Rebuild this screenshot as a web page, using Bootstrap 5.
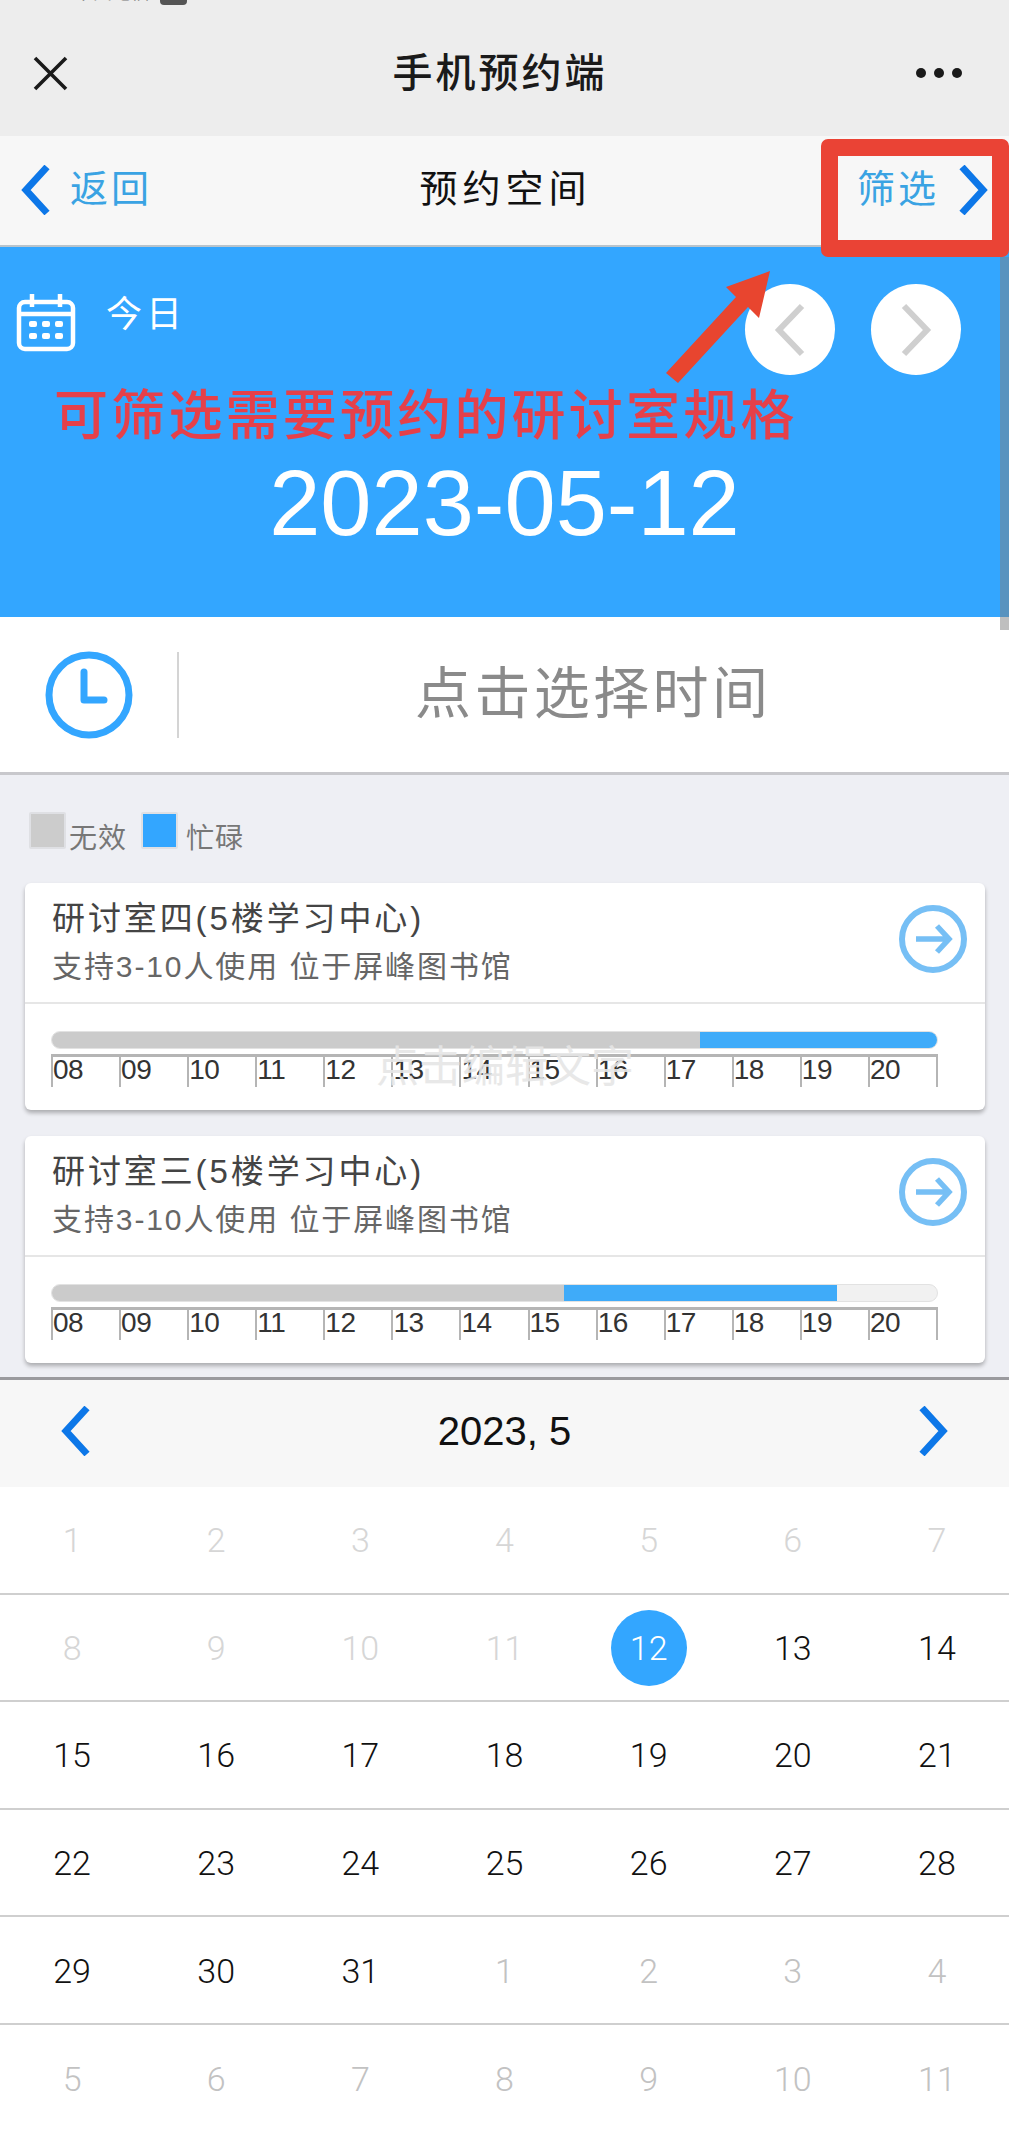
<!DOCTYPE html>
<html lang="zh-CN">
<head>
  <meta charset="UTF-8">
  <title>手机预约端</title>
  <meta name="viewport" content="width=device-width, initial-scale=1">
  <link href="https://cdn.jsdelivr.net/npm/bootstrap@5.3.3/dist/css/bootstrap.min.css" rel="stylesheet">
  <style>
    html, body {
      margin: 0;
      background: #fff;
    }
    body {
      font-family: "Liberation Sans", "Noto Sans CJK SC", sans-serif;
      color: #222;
    }
    .page-wrap {
      position: relative;
      width: 1009px;
      height: 2132px;
      overflow: hidden;
    }
    /* wechat title bar */
    .wx-bar {
      height: 136px;
      background: #ededed;
      padding: 10px 47px 0 33px;
    }
    .wx-status {
      position: absolute;
      left: 74px;
      top: -19px;
      gap: 10px;
      font-size: 19px;
      line-height: 24px;
      color: #777;
    }
    .wx-badge {
      width: 27px;
      height: 24px;
      border-radius: 4px;
      background: #555;
    }
    .wx-title {
      font-size: 40px;
      font-weight: 500;
      letter-spacing: 3px;
      color: #1a1a1a;
      margin-left: 16px;
    }
    .wx-dot {
      width: 10px;
      height: 10px;
      border-radius: 50%;
      background: #1a1a1a;
    }
    /* page nav */
    .nav-strip {
      height: 111px;
      background: #f7f7f7;
      border-bottom: 2px solid #b9c4cc;
      padding: 0 21px 2px;
    }
    .nav-link-blue {
      font-size: 38px;
      letter-spacing: 3px;
      color: #3aa3e3;
    }
    .nav-side {
      width: 240px;
      gap: 19px;
    }
    .nav-name {
      font-size: 38px;
      letter-spacing: 5px;
      color: #111;
      margin-left: 2px;
    }
    /* blue date panel */
    .date-panel {
      position: relative;
      height: 370px;
      background: #33a6ff;
      padding: 37px 48px 0 16px;
    }
    .today-label {
      font-size: 36px;
      letter-spacing: 4px;
      line-height: 40px;
      color: #fff;
      margin: 11px 0 0 30px;
    }
    .round-btn {
      width: 90px;
      height: 91px;
      border-radius: 50%;
      background: #fff;
    }
    .round-gap {
      gap: 36px;
    }
    .date-big {
      font-size: 92px;
      line-height: 100px;
      color: #fff;
      text-align: center;
      margin: 78px 0 0 32px;
    }
    .side-scroll {
      position: absolute;
      right: 0;
      top: 10px;
      width: 9px;
      height: 373px;
      background: rgba(128, 128, 128, .5);
    }
    /* time picker row */
    .time-row {
      height: 158px;
      background: #fff;
      border-bottom: 3px solid #c8c8cc;
      padding-left: 44px;
    }
    .time-rule {
      width: 2px;
      height: 86px;
      background: #d4d4d4;
      margin-left: 43px;
    }
    .time-text {
      font-size: 56px;
      line-height: 64px;
      letter-spacing: 3.4px;
      color: #8a8a8a;
      margin: -2px 0 0 58px;
      padding-left: 178px;
    }
    /* room list */
    .list-area {
      height: 602px;
      background: #eeeff4;
      padding: 37px 24px 0 25px;
    }
    .legend-row {
      height: 36px;
      margin-bottom: 35px;
      margin-left: 4px;
      align-items: flex-start;
    }
    .legend-box {
      width: 37px;
      height: 37px;
      border: 2px solid #dfe0e4;
      border-radius: 2px;
    }
    .legend-gray { background: #cccccc; }
    .legend-blue { background: #33a6ff; margin-left: 14px; }
    .legend-text {
      font-size: 28px;
      line-height: 32px;
      letter-spacing: 1px;
      color: #777;
      margin: 11px 0 0 3px;
    }
    .legend-blue + .legend-text { margin-left: 8px; }
    .room-card {
      position: relative;
      height: 227px;
      margin-bottom: 26px;
      border: 0;
      border-radius: 6px;
      background: #fff;
      box-shadow: 0 3px 4px rgba(0, 0, 0, .28);
    }
    .room-head {
      height: 121px;
      border-bottom: 2px solid #e6e6e6;
      padding: 14px 18px 0 27px;
    }
    .room-name {
      font-size: 33px;
      line-height: 44px;
      letter-spacing: 2.9px;
      color: #444;
    }
    .room-desc {
      font-size: 30px;
      line-height: 44px;
      letter-spacing: 1.9px;
      color: #666;
      margin-top: 4px;
    }
    .room-body {
      padding: 27px 47px 0 26px;
    }
    .slot-bar {
      height: 18px;
      border-radius: 9px;
      overflow: hidden;
      background: #f1f1f1;
      border: 1px solid #e2e2e2;
    }
    .slot-off { background: #cbcbcb; }
    .slot-busy { background: #3fabf9; }
    .tick-row {
      margin-top: 5px;
      height: 33px;
      border-top: 3px solid #b5b5b5;
      border-right: 2px solid #b5b5b5;
    }
    .tick-cell {
      flex: 1 1 0;
      border-left: 2px solid #b5b5b5;
      font-size: 28px;
      line-height: 26px;
      color: #333;
      letter-spacing: -.5px;
    }
    .edit-mark {
      position: absolute;
      left: 351px;
      top: 160px;
      font-size: 43px;
      line-height: 48px;
      white-space: nowrap;
      color: #e6e6e6;
      opacity: .9;
    }
    /* month calendar */
    .month-head {
      height: 110px;
      background: #f7f7f7;
      border-top: 3px solid #9a9a9e;
      padding: 0 61px 5px;
    }
    .month-text {
      font-size: 40px;
      color: #111;
    }
    .day-row {
      height: 107.6px;
      border-bottom: 2.5px solid #cfcfcf;
      padding-top: 2px;
    }
    .day-row:last-child { border-bottom: 0; }
    .day-cell {
      font-family: Roboto, "Liberation Sans", sans-serif;
      font-weight: 300;
      font-size: 34px;
      color: #111;
      flex: 1 1 0;
      text-align: center;
    }
    .day-dim { color: #d6d6d6; }
    .day-out { color: #c2c2c2; }
    .day-now {
      width: 76px;
      height: 76px;
      border-radius: 50%;
      background: #33a6ff;
      color: #fff;
    }
    /* annotation laid over the page */
    .note-box {
      position: absolute;
      left: 821px;
      top: 139px;
      width: 188px;
      height: 118px;
      border: 17px solid #ea4335;
      border-radius: 7px;
    }
    .note-arrow {
      position: absolute;
      left: 655px;
      top: 262px;
    }
    .note-text {
      position: absolute;
      left: 54px;
      top: 384px;
      font-size: 54px;
      line-height: 64px;
      font-weight: 500;
      letter-spacing: 3.2px;
      white-space: nowrap;
      color: #e5404a;
    }
  </style>
</head>
<body>
  <div class="page-wrap">
    <div class="wx-status d-flex align-items-end"><span>中国电信</span><span class="wx-badge"></span></div>

    <div class="wx-bar d-flex align-items-center justify-content-between">
      <svg width="35" height="35" viewBox="0 0 35 35"><path d="M2 2 L33 33 M33 2 L2 33" stroke="#1a1a1a" stroke-width="3.6" fill="none"/></svg>
      <div class="wx-title">手机预约端</div>
      <div class="d-flex gap-2">
        <span class="wx-dot"></span><span class="wx-dot"></span><span class="wx-dot"></span>
      </div>
    </div>

    <div class="nav-strip d-flex align-items-center justify-content-between">
      <div class="nav-side d-flex align-items-center">
        <svg width="30" height="50" viewBox="0 0 30 50"><polyline points="26,2 5,25 26,48" fill="none" stroke="#0d77e8" stroke-width="7"/></svg>
        <span class="nav-link-blue">返回</span>
      </div>
      <div class="nav-name">预约空间</div>
      <div class="nav-side d-flex align-items-center justify-content-end">
        <span class="nav-link-blue">筛选</span>
        <svg width="30" height="50" viewBox="0 0 30 50"><polyline points="4,2 25,25 4,48" fill="none" stroke="#0d77e8" stroke-width="7"/></svg>
      </div>
    </div>

    <div class="date-panel">
      <div class="d-flex justify-content-between">
        <div class="d-flex align-items-start">
          <svg class="mt-2" width="60" height="60" viewBox="0 0 60 60">
            <rect x="3" y="10" width="54" height="47" rx="6" fill="none" stroke="#fff" stroke-width="4.5"/>
            <path d="M3 22 H57 M16 2 V15 M44 2 V15" stroke="#fff" stroke-width="4.5" fill="none"/>
            <g fill="#fff">
              <rect x="13" y="29" width="8" height="6" rx="2"/><rect x="26" y="29" width="8" height="6" rx="2"/><rect x="39" y="29" width="8" height="6" rx="2"/>
              <rect x="13" y="41" width="8" height="6" rx="2"/><rect x="26" y="41" width="8" height="6" rx="2"/><rect x="39" y="41" width="8" height="6" rx="2"/>
            </g>
          </svg>
          <div class="today-label">今日</div>
        </div>
        <div class="d-flex round-gap">
          <div class="round-btn d-flex align-items-center justify-content-center">
            <svg width="32" height="54" viewBox="0 0 32 54"><polyline points="28,3 5,27 28,51" fill="none" stroke="#cfcfcf" stroke-width="6"/></svg>
          </div>
          <div class="round-btn d-flex align-items-center justify-content-center">
            <svg width="32" height="54" viewBox="0 0 32 54"><polyline points="4,3 27,27 4,51" fill="none" stroke="#cfcfcf" stroke-width="6"/></svg>
          </div>
        </div>
      </div>
      <div class="date-big">2023-05-12</div>
      <div class="side-scroll"></div>
    </div>

    <div class="time-row d-flex align-items-center">
      <svg width="90" height="90" viewBox="0 0 90 90">
        <circle cx="45" cy="45" r="40" fill="none" stroke="#33a6ff" stroke-width="7"/>
        <path d="M40 22 V50 H60" fill="none" stroke="#33a6ff" stroke-width="7" stroke-linecap="round" stroke-linejoin="round"/>
      </svg>
      <div class="time-rule"></div>
      <div class="time-text">点击选择时间</div>
    </div>

    <div class="list-area">
      <div class="legend-row d-flex">
        <span class="legend-box legend-gray"></span><span class="legend-text">无效</span>
        <span class="legend-box legend-blue"></span><span class="legend-text">忙碌</span>
      </div>

      <div class="card room-card">
        <div class="room-head d-flex justify-content-between align-items-start">
          <div>
            <div class="room-name">研讨室四(5楼学习中心)</div>
            <div class="room-desc">支持3-10人使用 位于屏峰图书馆</div>
          </div>
          <svg class="mt-2" width="68" height="68" viewBox="0 0 68 68">
            <circle cx="34" cy="34" r="31" fill="none" stroke="#76bff5" stroke-width="6"/>
            <path d="M17 34 H50 M38 21 L50 34 L38 47" fill="none" stroke="#76bff5" stroke-width="5.5"/>
          </svg>
        </div>
        <div class="room-body">
          <div class="slot-bar d-flex">
            <div class="slot-off" style="width: 73.2%"></div>
            <div class="slot-busy" style="width: 26.8%"></div>
          </div>
          <div class="tick-row d-flex">
            <div class="tick-cell">08</div><div class="tick-cell">09</div><div class="tick-cell">10</div><div class="tick-cell">11</div><div class="tick-cell">12</div><div class="tick-cell">13</div><div class="tick-cell">14</div><div class="tick-cell">15</div><div class="tick-cell">16</div><div class="tick-cell">17</div><div class="tick-cell">18</div><div class="tick-cell">19</div><div class="tick-cell">20</div>
          </div>
        </div>
        <div class="edit-mark">点击编辑文字</div>
      </div>

      <div class="card room-card">
        <div class="room-head d-flex justify-content-between align-items-start">
          <div>
            <div class="room-name">研讨室三(5楼学习中心)</div>
            <div class="room-desc">支持3-10人使用 位于屏峰图书馆</div>
          </div>
          <svg class="mt-2" width="68" height="68" viewBox="0 0 68 68">
            <circle cx="34" cy="34" r="31" fill="none" stroke="#76bff5" stroke-width="6"/>
            <path d="M17 34 H50 M38 21 L50 34 L38 47" fill="none" stroke="#76bff5" stroke-width="5.5"/>
          </svg>
        </div>
        <div class="room-body">
          <div class="slot-bar d-flex">
            <div class="slot-off" style="width: 57.9%"></div>
            <div class="slot-busy" style="width: 30.8%"></div>
          </div>
          <div class="tick-row d-flex">
            <div class="tick-cell">08</div><div class="tick-cell">09</div><div class="tick-cell">10</div><div class="tick-cell">11</div><div class="tick-cell">12</div><div class="tick-cell">13</div><div class="tick-cell">14</div><div class="tick-cell">15</div><div class="tick-cell">16</div><div class="tick-cell">17</div><div class="tick-cell">18</div><div class="tick-cell">19</div><div class="tick-cell">20</div>
          </div>
        </div>
      </div>
    </div>

    <div class="month-head d-flex align-items-center justify-content-between">
      <svg width="30" height="50" viewBox="0 0 30 50"><polyline points="26,2 5,25 26,48" fill="none" stroke="#0d77e8" stroke-width="7"/></svg>
      <div class="month-text">2023, 5</div>
      <svg width="30" height="50" viewBox="0 0 30 50"><polyline points="4,2 25,25 4,48" fill="none" stroke="#0d77e8" stroke-width="7"/></svg>
    </div>

    <div class="day-table">
      <div class="day-row d-flex align-items-center">
        <div class="day-cell day-dim">1</div><div class="day-cell day-dim">2</div><div class="day-cell day-dim">3</div><div class="day-cell day-dim">4</div><div class="day-cell day-dim">5</div><div class="day-cell day-dim">6</div><div class="day-cell day-dim">7</div>
      </div>
      <div class="day-row d-flex align-items-center">
        <div class="day-cell day-dim">8</div><div class="day-cell day-dim">9</div><div class="day-cell day-dim">10</div><div class="day-cell day-dim">11</div>
        <div class="day-cell d-flex justify-content-center"><span class="day-now d-flex align-items-center justify-content-center">12</span></div>
        <div class="day-cell">13</div><div class="day-cell">14</div>
      </div>
      <div class="day-row d-flex align-items-center">
        <div class="day-cell">15</div><div class="day-cell">16</div><div class="day-cell">17</div><div class="day-cell">18</div><div class="day-cell">19</div><div class="day-cell">20</div><div class="day-cell">21</div>
      </div>
      <div class="day-row d-flex align-items-center">
        <div class="day-cell">22</div><div class="day-cell">23</div><div class="day-cell">24</div><div class="day-cell">25</div><div class="day-cell">26</div><div class="day-cell">27</div><div class="day-cell">28</div>
      </div>
      <div class="day-row d-flex align-items-center">
        <div class="day-cell">29</div><div class="day-cell">30</div><div class="day-cell">31</div><div class="day-cell day-out">1</div><div class="day-cell day-out">2</div><div class="day-cell day-out">3</div><div class="day-cell day-out">4</div>
      </div>
      <div class="day-row d-flex align-items-center">
        <div class="day-cell day-out">5</div><div class="day-cell day-out">6</div><div class="day-cell day-out">7</div><div class="day-cell day-out">8</div><div class="day-cell day-out">9</div><div class="day-cell day-out">10</div><div class="day-cell day-out">11</div>
      </div>
    </div>

    <!-- red annotation on top of the screenshot -->
    <div class="note-box"></div>
    <svg class="note-arrow" width="125" height="130" viewBox="655 262 125 130">
      <polygon points="666,373 736,297 726,287 770,271 759,318 748,307 678,383" fill="#e8452f"/>
    </svg>
    <div class="note-text">可筛选需要预约的研讨室规格</div>
  </div>
  <script src="https://cdn.jsdelivr.net/npm/bootstrap@5.3.3/dist/js/bootstrap.bundle.min.js"></script>
</body>
</html>
